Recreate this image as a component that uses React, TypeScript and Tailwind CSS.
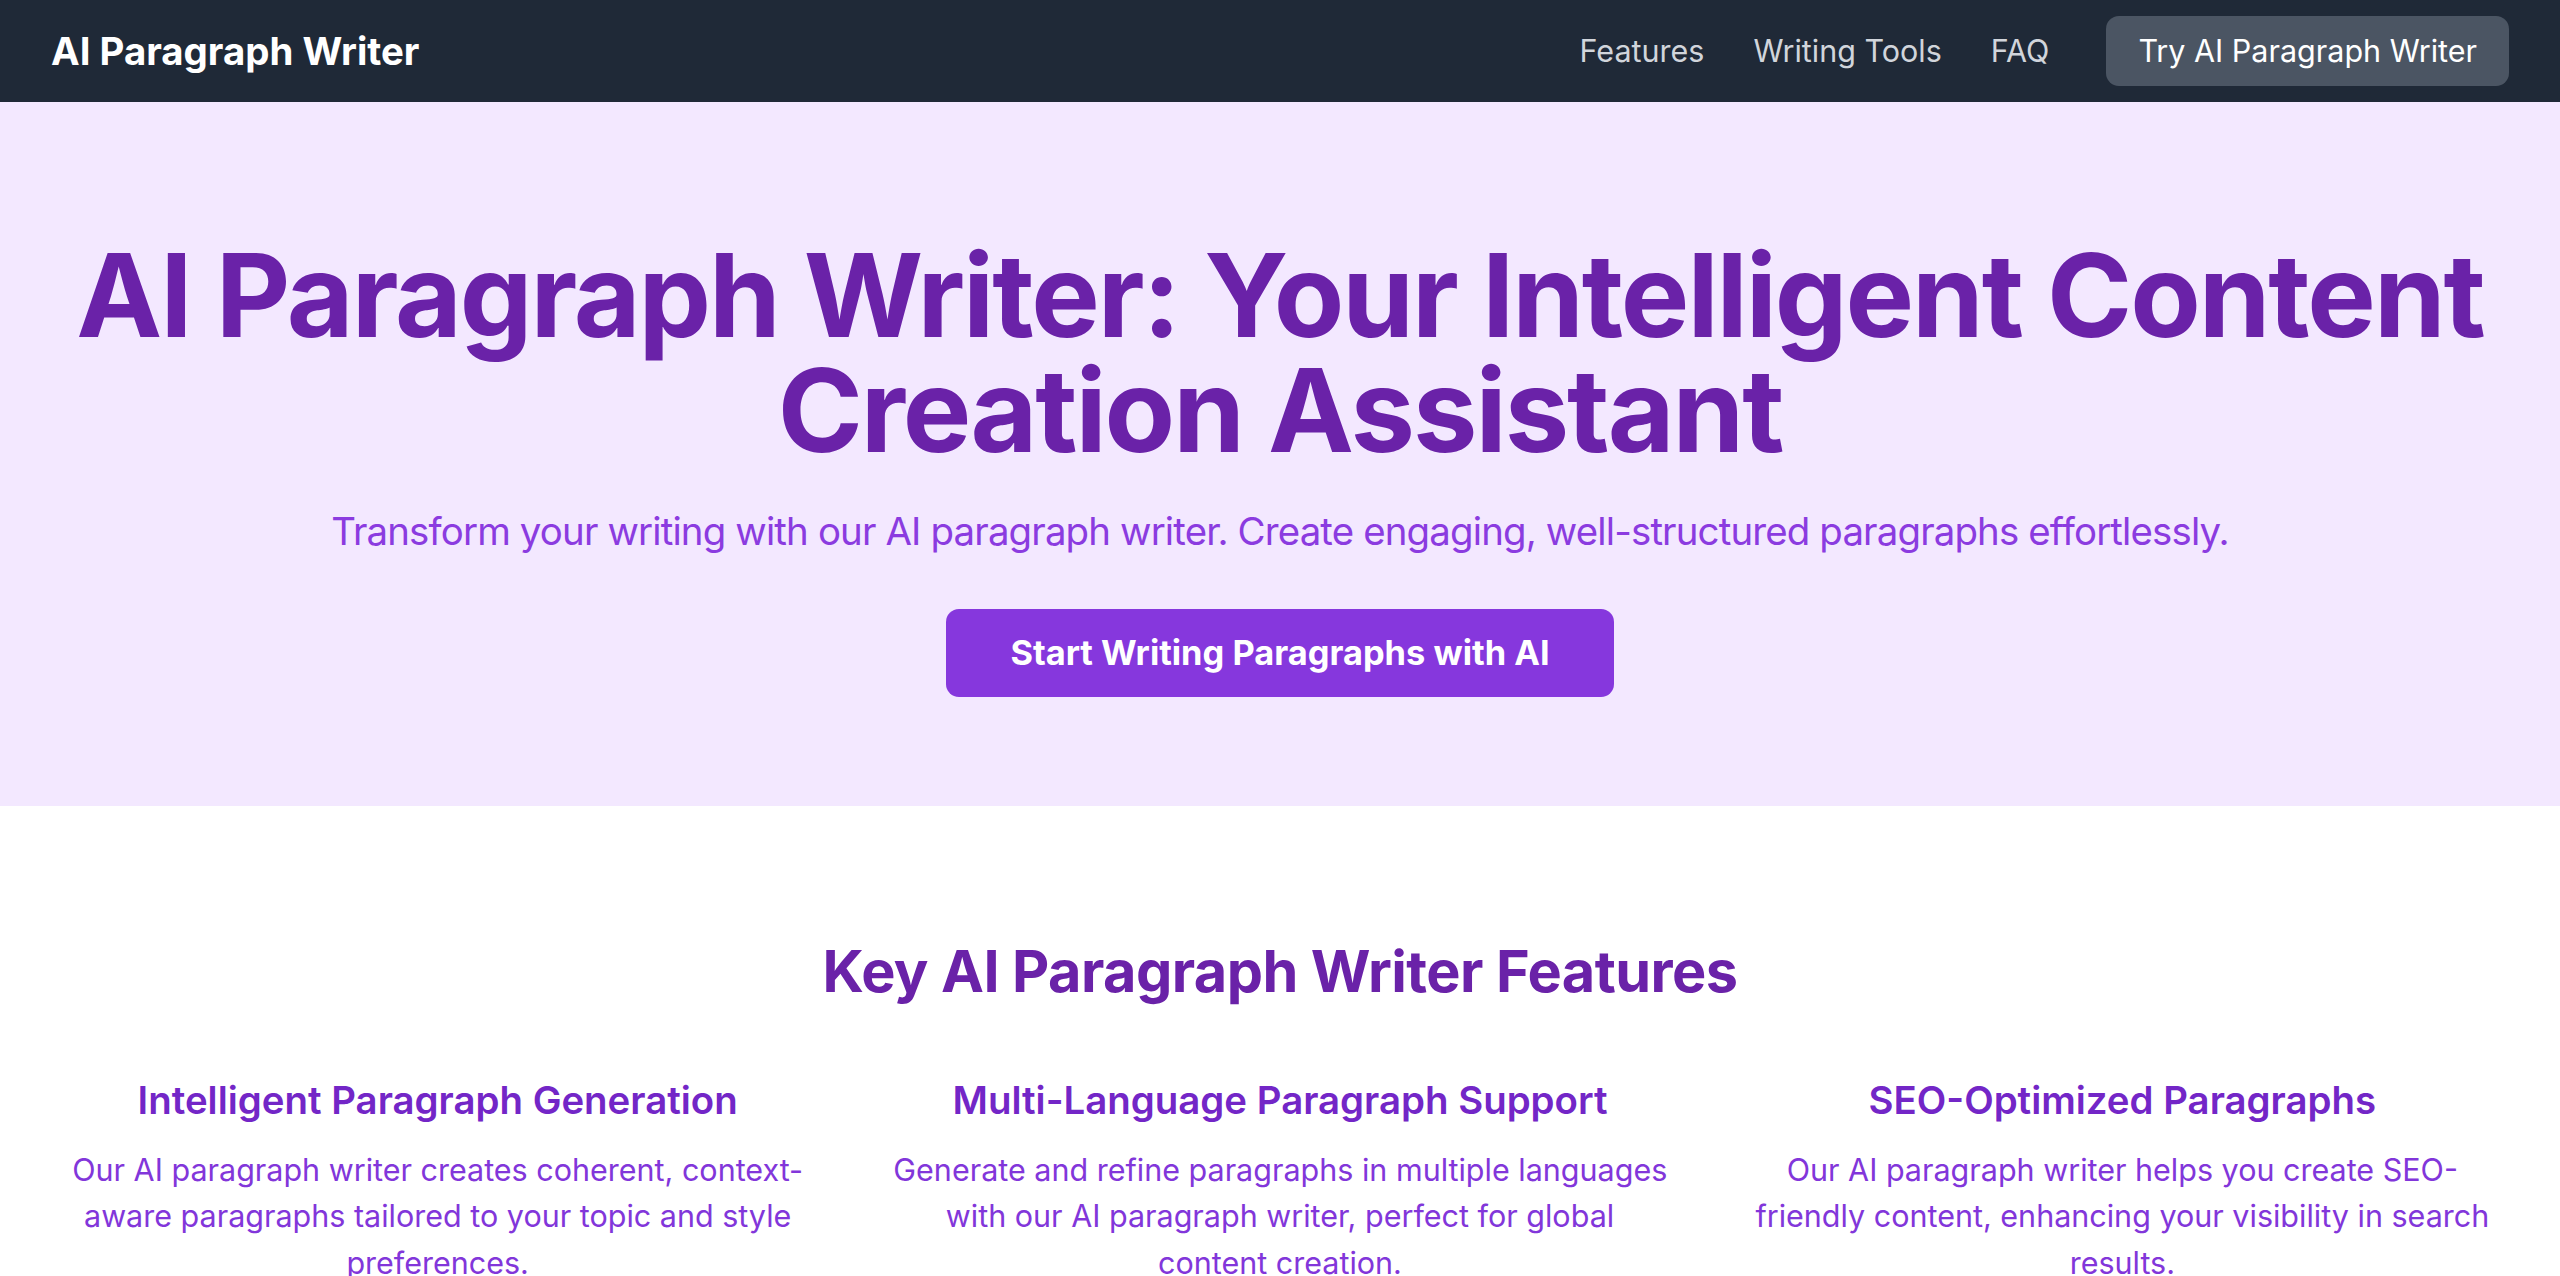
import React from "react";

const features = [
  {
    title: "Intelligent Paragraph Generation",
    lines: [
      "Our AI paragraph writer creates coherent, context-",
      "aware paragraphs tailored to your topic and style",
      "preferences.",
    ],
  },
  {
    title: "Multi-Language Paragraph Support",
    lines: [
      "Generate and refine paragraphs in multiple languages",
      "with our AI paragraph writer, perfect for global",
      "content creation.",
    ],
  },
  {
    title: "SEO-Optimized Paragraphs",
    lines: [
      "Our AI paragraph writer helps you create SEO-",
      "friendly content, enhancing your visibility in search",
      "results.",
    ],
  },
];

export default function App() {
  return (
    <div className="min-h-screen bg-white font-['Inter','Liberation_Sans',sans-serif]">
      <nav className="bg-[#1f2937] h-[102px]">
        <div className="w-[2458px] mx-auto h-full flex items-center justify-between">
          <a href="#" className="text-white text-[38.4px] leading-[51px] font-bold">
            AI Paragraph Writer
          </a>
          <div className="flex items-center gap-[49px]">
            <a href="#" className="text-[#d1d5db] text-[30.5px] leading-[44.8px]">
              Features
            </a>
            <a href="#" className="text-[#d1d5db] text-[30.5px] leading-[44.8px]">
              Writing Tools
            </a>
            <a href="#" className="text-[#d1d5db] text-[30.5px] leading-[44.8px]">
              FAQ
            </a>
            <a
              href="#"
              className="ml-[8px] bg-[#4b5563] text-white text-[30.5px] leading-[44.8px] px-[32px] py-[12.8px] rounded-[13px]"
            >
              Try AI Paragraph Writer
            </a>
          </div>
        </div>
      </nav>

      <section className="bg-[#f3e8ff] pt-[136px] pb-[109px] text-center">
        <div className="w-[2458px] mx-auto">
          <h1 className="text-[115.2px] leading-[115.2px] font-bold tracking-[-0.018em] text-[#6a22a8] mb-[38px]">
            AI Paragraph Writer: Your Intelligent Content Creation Assistant
          </h1>
          <p className="text-[38.4px] leading-[51.2px] tracking-[-0.022em] text-[#8b3be0] mb-[51px]">
            Transform your writing with our AI paragraph writer. Create engaging, well-structured paragraphs effortlessly.
          </p>
          <a
            href="#"
            className="inline-block bg-[#8637dd] text-white text-[34.4px] leading-[44.8px] font-bold px-[64px] py-[22px] rounded-[13px]"
          >
            Start Writing Paragraphs with AI
          </a>
        </div>
      </section>

      <section className="pt-[133px] pb-[128px]">
        <div className="w-[2458px] mx-auto">
          <h2 className="text-center text-[57.6px] leading-[64px] font-bold tracking-[-0.01em] text-[#6a22a8] mb-[72px]">
            Key AI Paragraph Writer Features
          </h2>
          <div className="grid grid-cols-3 gap-[69px]">
            {features.map((f) => (
              <div key={f.title} className="text-center">
                <h3 className="text-[38.4px] leading-[51.2px] font-semibold text-[#7326c7] mb-[20px]">
                  {f.title}
                </h3>
                <p className="text-[30.5px] leading-[46.8px] text-[#8236da] whitespace-nowrap">
                  {f.lines.map((l, i) => (
                    <React.Fragment key={i}>
                      {l}
                      {i < f.lines.length - 1 && <br />}
                    </React.Fragment>
                  ))}
                </p>
              </div>
            ))}
          </div>
        </div>
      </section>
    </div>
  );
}
